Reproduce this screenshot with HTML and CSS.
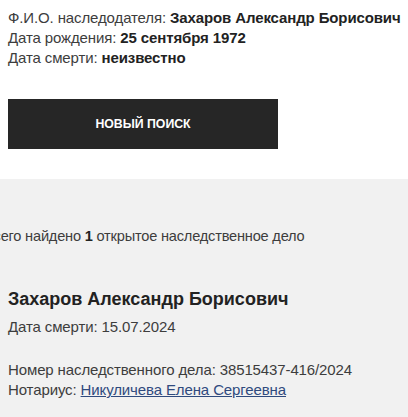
FILE: index.html
```html
<!DOCTYPE html>
<html lang="ru">
<head>
<meta charset="utf-8">
<link rel="stylesheet" href="styles.css">
</head>
<body>
<div class="info">
  <div class="row">Ф.И.О. наследодателя: <b>Захаров Александр Борисович</b></div>
  <div class="row">Дата рождения: <b>25 сентября 1972</b></div>
  <div class="row">Дата смерти: <b>неизвестно</b></div>
</div>
<button class="btn">НОВЫЙ ПОИСК</button>
<section class="results">
  <p class="count">Всего найдено <b>1</b> открытое наследственное дело</p>
  <div class="card">
    <h2 class="name">Захаров Александр Борисович</h2>
    <div class="row">Дата смерти: 15.07.2024</div>
    <div class="gap"></div>
    <div class="row">Номер наследственного дела: 38515437-416/2024</div>
    <div class="row">Нотариус: <a href="#" class="link">Никуличева Елена Сергеевна</a></div>
  </div>
</section>
</body>
</html>
```
FILE: styles.css
```css
html, body {
  margin: 0;
  padding: 0;
  background: #fff;
  overflow: hidden;
}
body {
  font-family: "Liberation Sans", Arial, sans-serif;
  font-size: 15px;
  line-height: 20px;
  color: #3d3d3d;
  letter-spacing: -0.12px;
}
b { color: #222; font-weight: 700; }
.row { white-space: nowrap; }
.info {
  padding: 8px 8px 0;
}
.btn {
  display: block;
  margin: 31px 0 0 8px;
  width: 270px;
  height: 50px;
  border: 0;
  background: #262626;
  color: #fff;
  font-family: "Liberation Sans", Arial, sans-serif;
  font-size: 12.3px;
  font-weight: 700;
  letter-spacing: 0;
  padding: 0;
}
.results {
  margin-top: 30px;
  background: #f1f1f1;
  padding: 47px 8px 30px;
}
.count {
  margin: 0 0 0 -24px;
  font-size: 14.6px;
  letter-spacing: -0.2px;
  white-space: nowrap;
}
.card {
  padding-top: 42px;
}
.name {
  margin: 0 0 7px;
  font-size: 18px;
  line-height: 22px;
  font-weight: 700;
  color: #222;
  letter-spacing: 0;
}
.gap { height: 23px; }
.link {
  color: #2f4a7e;
  text-decoration: underline;
}
```
